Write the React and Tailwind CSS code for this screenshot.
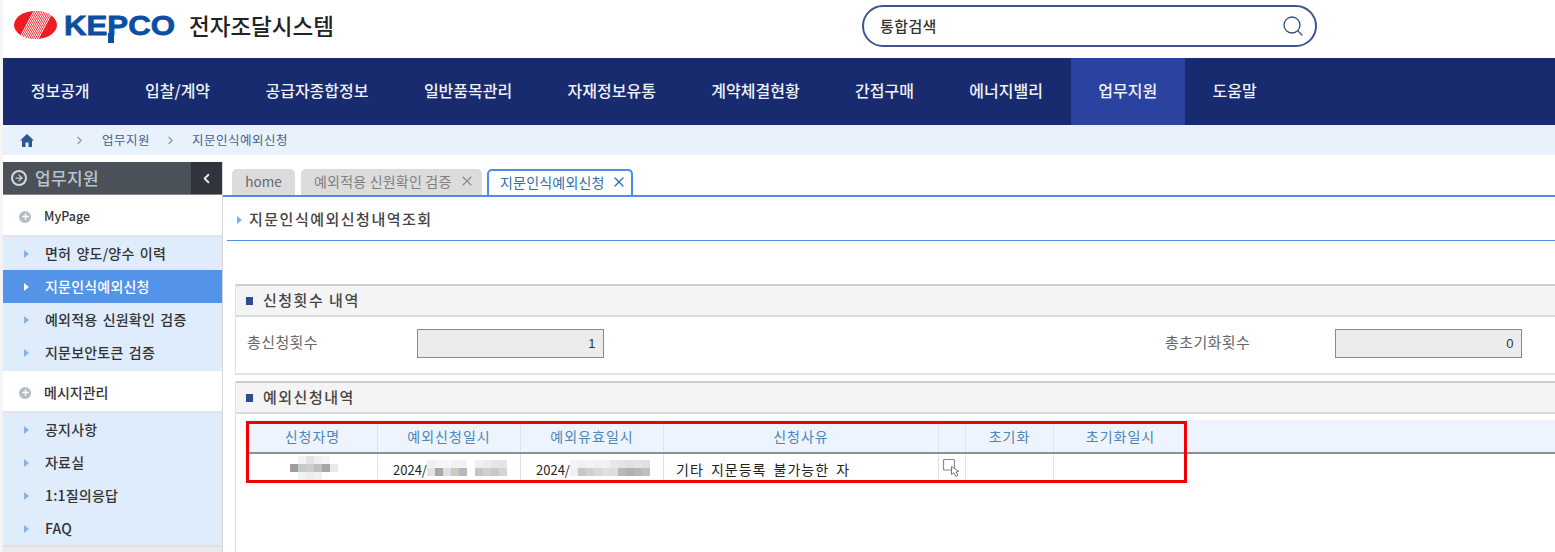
import { ChevronRight, ChevronLeft, Search, X, ArrowRight, Plus } from "lucide-react";

const font = { fontFamily: '"Noto Sans CJK KR", sans-serif' };

const navItems = ["정보공개", "입찰/계약", "공급자종합정보", "일반품목관리", "자재정보유통", "계약체결현황", "간접구매", "에너지밸리", "업무지원", "도움말"];

// blurred-out values, pixel blocks by row
const mosaicName = [
  ["#ffffff", "#f4f4f4", "#e4e4e4", "#f0f0f0", "#f4f4f4", "#ffffff"],
  ["#a39b96", "#c3cacb", "#d1ccc4", "#bcc0c4", "#a8a4a2", "#e8e8e8"],
  ["#ffffff", "#f2f2f2", "#ececec", "#f0f0f0", "#ffffff", "#ffffff"],
];
const mosaicDate1 = [
  ["#f0f0f0", "#f4f4f4", "#f6f6f6", "#f2f2f2", "#f2f2f2", "#ffffff", "#f0f0f0", "#ececec", "#e6e6e6", "#e4e4e4"],
  ["#e2e2e2", "#a9a7a7", "#dedede", "#c9cac0", "#b5b8bc", "#ffffff", "#c5c5c5", "#d0d0d0", "#c8c8c8", "#d4d4d4"],
];
const mosaicDate2 = [
  ["#f4f4f4", "#f0f0f0", "#f4f4f4", "#f0f0f0", "#f2f2f2", "#e8e8e8", "#e4e4e4", "#e0e0e0", "#e4e4e4", "#e0e0e0"],
  ["#eeeeee", "#c9c6c6", "#d0d0d0", "#d8d8d8", "#e0e0e0", "#dddddd", "#b8b8b8", "#b0b0b4", "#b8b8bc", "#c0c0c4"],
];

function Caret({ className }) {
  return (
    <svg width="5" height="8" viewBox="0 0 5 8" className={className}>
      <path d="M0 0 L5 4 L0 8 Z" fill="currentColor" />
    </svg>
  );
}

function Logo() {
  const stripes = [];
  for (let i = 0; i < 11; i++) {
    stripes.push(<path key={i} d={`M${4 + i * 1.9} 30 L${20 + i * 1.9} 0`} />);
  }
  return (
    <div className="flex items-start">
      <svg width="43" height="28" viewBox="0 0 43 28">
        <defs>
          <clipPath id="ball">
            <ellipse cx="21.5" cy="14" rx="21.5" ry="14" />
          </clipPath>
        </defs>
        <g clipPath="url(#ball)">
          <rect width="43" height="28" fill="#ee1c25" />
          <g stroke="#ffffff" strokeWidth="1">
            {stripes}
          </g>
        </g>
      </svg>
      <svg width="116" height="38" viewBox="0 0 116 38" className="ml-[7px] -mt-[2px] -mb-[3px] overflow-visible">
        <text x="0" y="26" textLength="111" lengthAdjust="spacingAndGlyphs" fontFamily="'Liberation Sans', sans-serif" fontWeight="700" fontSize="28" fill="#0b4ea2" stroke="#0b4ea2" strokeWidth="0.8">KEPCO</text>
        <rect x="44" y="24" width="6" height="10" fill="#0b4ea2" />
      </svg>
    </div>
  );
}

function HomeIcon() {
  return (
    <svg width="14" height="13" viewBox="0 0 14 13">
      <path d="M7 0 L14 6.5 L12 6.5 L12 13 L8.5 13 L8.5 8.5 L5.5 8.5 L5.5 13 L2 13 L2 6.5 L0 6.5 Z" fill="#2a5a93" />
    </svg>
  );
}

function SideHead({ label, size }) {
  return (
    <div className={`h-[42px] bg-white border-b-2 border-[#e4e4e4] flex items-center pl-[16px] pt-[3px] font-medium text-[#333] ${size}`}>
      <span className="w-[12px] h-[12px] rounded-full bg-[#b4bcc6] flex items-center justify-center mr-[13px]">
        <Plus size={9} strokeWidth={4} className="text-white" />
      </span>
      {label}
    </div>
  );
}

function SideItem({ label, active }) {
  return (
    <div className={`h-[33px] flex items-center pl-[21px] text-[14px] tracking-[0.2px] [word-spacing:2px] font-medium ${active ? "bg-[#5394e8] text-white" : "text-[#333]"}`}>
      <Caret className={`mr-[16px] ${active ? "text-white" : "text-[#7fb2ee]"}`} />
      {label}
    </div>
  );
}

function Mosaic({ rows, className }) {
  return (
    <span className={`inline-flex flex-col ${className}`}>
      {rows.map((row, r) => (
        <span key={r} className="flex h-[8px]">
          {row.map((c, i) => (
            <span key={i} className="w-[8px] h-full" style={{ backgroundColor: c }} />
          ))}
        </span>
      ))}
    </span>
  );
}

function Th({ className, children }) {
  return (
    <div className={`h-full flex items-center justify-center border-r border-[#dfe3e8] text-[14px] tracking-[1px] text-[#4a86b8] ${className}`}>{children}</div>
  );
}

function Td({ className, children }) {
  return (
    <div className={`h-full flex items-center border-r border-[#dfe3e8] text-[13px] text-[#222] ${className}`}>{children}</div>
  );
}

function SectionHead({ label }) {
  return (
    <div className="h-[33px] bg-[#f4f4f4] border-t-2 border-b-2 border-t-[#c8cfd6] border-b-[#d9dcdf] flex items-center pl-[10px] text-[15px] tracking-[1.5px] font-medium text-[#444]">
      <span className="w-[7px] h-[8px] bg-[#2f4c92] mr-[10px]" />
      {label}
    </div>
  );
}

function CountBox({ value }) {
  return (
    <div className="w-[187px] h-[29px] -mt-[3px] bg-[#ececec] border border-[#8a8a8a] flex items-center justify-end pr-[7px] text-[13px] text-[#333]" style={{ fontFamily: '"Liberation Sans", sans-serif' }}>{value}</div>
  );
}

export default function App() {
  return (
    <div className="w-[1555px] h-[552px] overflow-hidden bg-white border-l-[3px] border-[#f4f4f4] flex flex-col" style={font}>
      <div className="h-[58px] flex items-center">
        <div className="w-[859px] flex items-center pl-[11px] pb-[4px]">
          <Logo />
          <span className="ml-[9px] -mt-[3px] text-[22.5px] font-medium text-[#222] leading-none">전자조달시스템</span>
        </div>
        <div className="w-[455px] h-[42px] -mt-[6px] rounded-full border-2 border-[#3f5591] flex items-center justify-between pl-[16px] pr-[10px]">
          <span className="text-[15px] tracking-[0.4px] font-medium text-[#333]">통합검색</span>
          <Search size={24} strokeWidth={1.3} className="text-[#2f4c7a]" />
        </div>
      </div>

      <div className="h-[67px] bg-[#182b6e] flex">
        {navItems.map((item) => (
          <div key={item} className={`h-full px-[27.7px] pb-[3px] flex items-center text-[16px] font-medium text-[#eef1f8] ${item === "업무지원" ? "bg-[#2a43a0]" : ""}`}>
            {item}
          </div>
        ))}
      </div>

      <div className="h-[30px] bg-[#e8f1fc] flex items-center pl-[17px] text-[12.5px] tracking-[0.5px] text-[#44638c]">
        <HomeIcon />
        <ChevronRight size={13} className="ml-[39px] text-[#7f97b5]" />
        <span className="ml-[16px]">업무지원</span>
        <ChevronRight size={13} className="ml-[14px] text-[#7f97b5]" />
        <span className="ml-[15px]">지문인식예외신청</span>
      </div>

      <div className="flex-1 flex pt-[7px] min-h-0">
        <div className="w-[220px] shrink-0 border-r border-[#d6d6d6] flex flex-col">
          <div className="h-[33px] bg-[#4b5159] flex items-center border-b border-[#888]">
            <span className="w-[16px] h-[16px] ml-[8px] mr-[8px] rounded-full border-2 border-[#d8d8d8] flex items-center justify-center">
              <ArrowRight size={10} strokeWidth={3} className="text-[#d8d8d8]" />
            </span>
            <span className="text-[17px] tracking-[0.4px] font-medium text-[#bcc2c9] flex-1">업무지원</span>
            <span className="w-[31px] h-full bg-[#30343c] flex items-center justify-center">
              <ChevronLeft size={15} strokeWidth={3} className="text-[#e8e8e8]" />
            </span>
          </div>
          <SideHead label="MyPage" size="text-[12.5px]" />
          <div className="bg-[#dfecfb] pb-[2px]">
            <SideItem label="면허 양도/양수 이력" />
            <SideItem label="지문인식예외신청" active />
            <SideItem label="예외적용 신원확인 검증" />
            <SideItem label="지문보안토큰 검증" />
          </div>
          <SideHead label="메시지관리" size="text-[14px]" />
          <div className="bg-[#dfecfb]">
            <SideItem label="공지사항" />
            <SideItem label="자료실" />
            <SideItem label="1:1질의응답" />
            <SideItem label="FAQ" />
          </div>
          <div className="flex-1 bg-[#efeaea] border-t-2 border-[#e2e2e2]" />
        </div>

        <div className="flex-1 min-w-0 flex flex-col">
          <div className="h-[33px] pl-[9px] flex items-end border-b-2 border-[#4a8ee6] box-content">
            <div className="w-[63px] h-[26px] pb-[2px] bg-[#dcdcdc] rounded-t-[5px] flex items-center justify-center text-[13.5px] text-[#666]">home</div>
            <div className="w-[181px] h-[26px] pb-[2px] ml-[6px] bg-[#dcdcdc] rounded-t-[5px] flex items-center pl-[13px] text-[14px] tracking-[0.2px] text-[#808080]">
              예외적용 신원확인 검증
              <X size={16} strokeWidth={1.6} className="ml-[8px] text-[#7e8a96]" />
            </div>
            <div className="w-[146px] h-[26px] pb-[2px] ml-[5px] bg-white rounded-t-[5px] border-2 border-b-0 border-[#4a8ee6] flex items-center pl-[11px] text-[14px] tracking-[0.2px] text-[#2f6fa8]">
              지문인식예외신청
              <X size={16} strokeWidth={1.8} className="ml-[6px] text-[#2f6fa8]" />
            </div>
          </div>

          <div className="h-[44px] ml-[4px] pt-[2px] flex items-center border-b border-[#4a8ee6] pl-[10px] text-[15px] tracking-[1.5px] font-medium text-[#444]">
            <Caret className="mr-[7px] text-[#7fb2ee]" />
            지문인식예외신청내역조회
          </div>

          <div className="mt-[43px] ml-[12px] border-l border-[#e2e2e2]">
            <SectionHead label="신청횟수 내역" />
            <div className="h-[58px] border-b-2 border-[#e2e2e2] flex items-center pl-[11px] text-[15px] tracking-[0.4px] text-[#666]">
              <span className="w-[170px] -mt-[5px]">총신청횟수</span>
              <CountBox value="1" />
              <span className="ml-[561px] w-[170px] -mt-[5px]">총초기화횟수</span>
              <CountBox value="0" />
            </div>
          </div>

          <div className="mt-[6px] ml-[12px] flex-1 border-l border-[#e2e2e2] flex flex-col">
            <SectionHead label="예외신청내역" />
            <div className="pt-[6px] pl-[12px]">
              <div className="relative">
                <div className="h-[34px] flex bg-[#eef4fd] border-b-2 border-[#8f8f8f]">
                  <Th className="w-[130px]">신청자명</Th>
                  <Th className="w-[143px]">예외신청일시</Th>
                  <Th className="w-[143px]">예외유효일시</Th>
                  <Th className="w-[275px]">신청사유</Th>
                  <Th className="w-[27px]" />
                  <Th className="w-[88px]">초기화</Th>
                  <Th className="w-[133px] border-r-0">초기화일시</Th>
                </div>
                <div className="h-[28px] flex w-[939px]">
                  <Td className="w-[130px] justify-center pl-[2px]"><Mosaic rows={mosaicName} /></Td>
                  <Td className="w-[143px] pl-[15px] pt-[3px]">2024/<Mosaic rows={mosaicDate1} className="-mt-[3px]" /></Td>
                  <Td className="w-[143px] pl-[15px] pt-[3px]">2024/<Mosaic rows={mosaicDate2} className="-mt-[3px]" /></Td>
                  <Td className="w-[275px] pl-[12px] pt-[3px] text-[14px] tracking-[1px] [word-spacing:3px]">기타 지문등록 불가능한 자</Td>
                  <Td className="w-[27px] justify-center">
                    <svg width="20" height="20" viewBox="0 0 20 20" fill="none">
                      <rect x="1.5" y="1.5" width="11" height="10.5" rx="1" stroke="#8a8a8a" strokeWidth="1.2" />
                      <path d="M9.5 8.5 L9.5 16.5 L11.8 14.8 L14 18.5 L16 17.3 L14 14 L17 13.5 Z" fill="#ffffff" stroke="#777" strokeWidth="1" />
                    </svg>
                  </Td>
                  <Td className="w-[88px]" />
                  <Td className="w-[133px] border-r-0" />
                </div>
                {/* red highlight over the table */}
                <div className="absolute -left-[2px] top-[1px] w-[941px] h-[62px] border-[3px] border-[#f00000] pointer-events-none" />
              </div>
            </div>
          </div>
        </div>
      </div>
    </div>
  );
}
